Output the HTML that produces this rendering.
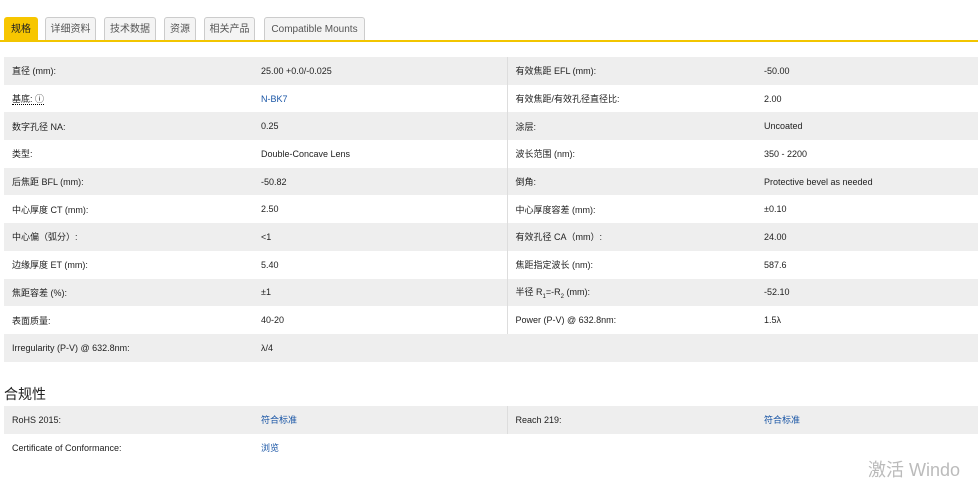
<!DOCTYPE html>
<html><head><meta charset="utf-8"><style>
body{margin:0;width:978px;height:478px;background:#fff;font-family:"Liberation Sans","Noto Sans CJK SC",sans-serif;color:#222;position:relative;overflow:hidden}
.tabs{position:absolute;top:17px;left:0;width:978px;height:23px;border-bottom:2px solid #f2c500}
.tab{position:absolute;top:0;height:23px;box-sizing:border-box;border:1px solid #ccc;border-bottom:none;background:#f4f4f4;border-radius:3px 3px 0 0;font-size:10px;color:#555;text-align:center;line-height:23px}
.tab.on{background:#f7c600;border-color:#f7c600;color:#222}
table{position:absolute;left:4px;width:974px;border-collapse:collapse;font-size:9px}
td{height:27.7px;padding:0 0 0 8px;box-sizing:border-box;vertical-align:middle}
tr:nth-child(odd) td{background:#eeeeee}
td.c1{width:249px}td.c2{width:254px;border-right:1px solid #ddd}td.c3{width:249px}
a{color:#1a56a6;text-decoration:none}
h3{position:absolute;top:384px;left:4px;margin:0;font-size:14px;font-weight:normal}
.wm{position:absolute;left:868px;top:456px;font-size:18px;color:#bbb}
</style></head><body>
<div class="tabs">
<div class="tab on" style="left:4px;width:34px">规格</div>
<div class="tab" style="left:45px;width:51px">详细资料</div>
<div class="tab" style="left:104px;width:52px">技术数据</div>
<div class="tab" style="left:164px;width:32px">资源</div>
<div class="tab" style="left:204px;width:51px">相关产品</div>
<div class="tab" style="left:264px;width:101px">Compatible Mounts</div>
</div>
<table style="top:57px">
<tr><td class="c1">直径 (mm):</td><td class="c2">25.00 +0.0/-0.025</td><td class="c3">有效焦距 EFL (mm):</td><td>-50.00</td></tr>
<tr><td class="c1"><span style="border-bottom:1px dotted #000">基底: ⓘ</span></td><td class="c2"><a>N-BK7</a></td><td class="c3">有效焦距/有效孔径直径比:</td><td>2.00</td></tr>
<tr><td class="c1">数字孔径 NA:</td><td class="c2">0.25</td><td class="c3">涂层:</td><td>Uncoated</td></tr>
<tr><td class="c1">类型:</td><td class="c2">Double-Concave Lens</td><td class="c3">波长范围 (nm):</td><td>350 - 2200</td></tr>
<tr><td class="c1">后焦距 BFL (mm):</td><td class="c2">-50.82</td><td class="c3">倒角:</td><td>Protective bevel as needed</td></tr>
<tr><td class="c1">中心厚度 CT (mm):</td><td class="c2">2.50</td><td class="c3">中心厚度容差 (mm):</td><td>±0.10</td></tr>
<tr><td class="c1">中心偏（弧分）:</td><td class="c2">&lt;1</td><td class="c3">有效孔径 CA（mm）:</td><td>24.00</td></tr>
<tr><td class="c1">边缘厚度 ET (mm):</td><td class="c2">5.40</td><td class="c3">焦距指定波长 (nm):</td><td>587.6</td></tr>
<tr><td class="c1">焦距容差 (%):</td><td class="c2">±1</td><td class="c3">半径 R<sub style="font-size:6px">1</sub>=-R<sub style="font-size:6px">2</sub> (mm):</td><td>-52.10</td></tr>
<tr><td class="c1">表面质量:</td><td class="c2">40-20</td><td class="c3">Power (P-V) @ 632.8nm:</td><td>1.5λ</td></tr>
<tr><td class="c1">Irregularity (P-V) @ 632.8nm:</td><td class="c2" style="border-right:none">λ/4</td><td class="c3"></td><td></td></tr>
</table>
<h3>合规性</h3>
<table style="top:406px">
<tr><td class="c1">RoHS 2015:</td><td class="c2"><a>符合标准</a></td><td class="c3">Reach 219:</td><td><a>符合标准</a></td></tr>
<tr><td class="c1">Certificate of Conformance:</td><td class="c2" style="border-right:none"><a>浏览</a></td><td class="c3"></td><td></td></tr>
</table>
<div class="wm">激活 Windo</div>
</body></html>
